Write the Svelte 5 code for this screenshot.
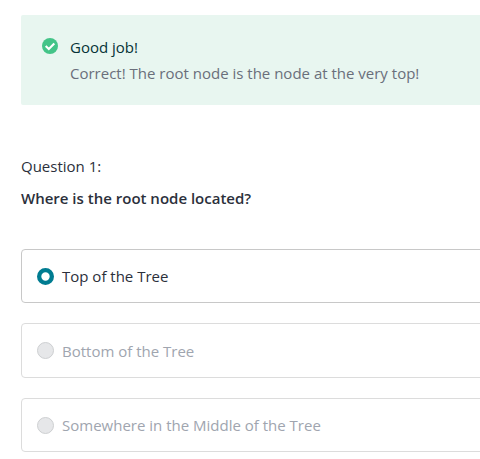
<script>
  const options = [
    { label: 'Top of the Tree', selected: true },
    { label: 'Bottom of the Tree', selected: false },
    { label: 'Somewhere in the Middle of the Tree', selected: false }
  ];
</script>

<main>
  <section class="feedback">
    <svg class="check" width="16" height="16" viewBox="0 0 16 16" aria-hidden="true">
      <circle cx="8" cy="8" r="8" fill="#43c488" />
      <path d="M3.7 8 6.8 11 12.3 5.5" fill="none" stroke="#fff" stroke-width="2.1" />
    </svg>
    <div class="copy">
      <div class="title">Good job!</div>
      <div class="message">Correct! The root node is the node at the very top!</div>
    </div>
  </section>
  <p class="number">Question 1:</p>
  <p class="question">Where is the root node located?</p>
  <div class="options">
    {#each options as option}
      <div class="option" class:selected={option.selected}>
        <svg class="radio" width="17" height="17" viewBox="0 0 17 17" aria-hidden="true">
          {#if option.selected}
            <circle cx="8.5" cy="8.5" r="6.35" fill="#fff" stroke="#007c91" stroke-width="4.3" />
          {:else}
            <circle cx="8.5" cy="8.5" r="8" fill="#e6e7e9" stroke="#cdcfd1" />
          {/if}
        </svg>
        <span>{option.label}</span>
      </div>
    {/each}
  </div>
</main>

<style>
  :global(body) { margin: 0; background: #fff; overflow: hidden; }
  main {
    box-sizing: border-box;
    width: 500px;
    height: 459px;
    overflow: hidden;
    padding: 15px 0 0 21px;
    font: 15px/26px "Open Sans", sans-serif;
    color: #2b303b;
  }
  .feedback {
    box-sizing: border-box;
    height: 90px;
    padding: 19px 0 0 21px;
    display: flex;
    gap: 12px;
    border-radius: 2px;
    background: #e8f6f0;
  }
  .check { margin-top: 4px; flex: none; }
  .copy { white-space: nowrap; }
  .title { color: #053337; }
  .message { color: #6a6f7b; }
  p { margin: 0; }
  .number { margin-top: 48px; }
  .question { margin-top: 6px; font-weight: 600; }
  .options { margin-top: 38px; display: flex; flex-direction: column; gap: 20px; }
  .option {
    box-sizing: border-box;
    height: 54px;
    padding-left: 15px;
    display: flex;
    align-items: center;
    gap: 8px;
    border: 1px solid #dcdcdc;
    border-radius: 4px;
    color: #a0a5af;
  }
  .option:nth-child(2) { height: 55px; }
  .radio { flex: none; }
  .selected { border-color: #c8c8c8; color: #2b303b; }
</style>
